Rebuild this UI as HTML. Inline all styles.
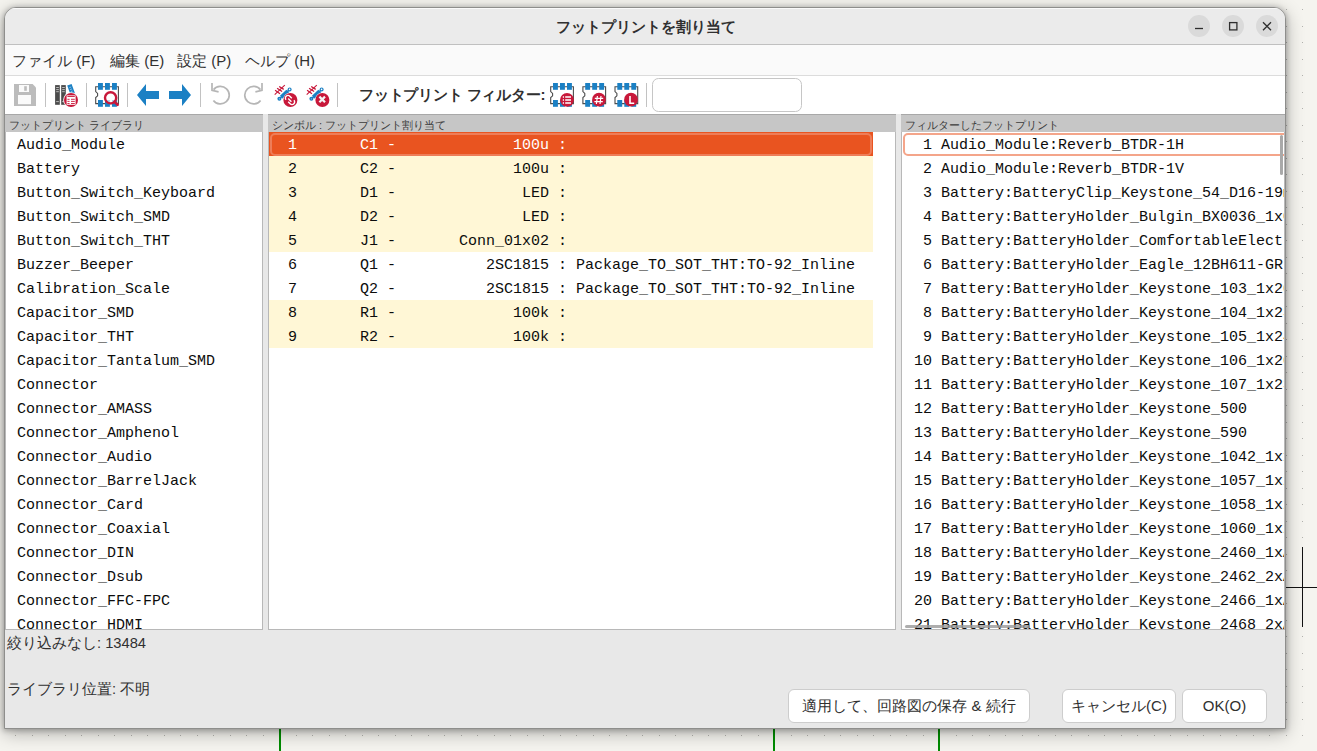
<!DOCTYPE html>
<html><head><meta charset="utf-8">
<style>
*{box-sizing:border-box;margin:0;padding:0}
html,body{width:1317px;height:751px;overflow:hidden;background:#f5f4ef;font-family:"Liberation Sans",sans-serif;position:relative}
#win{position:absolute;left:4px;top:7px;width:1282px;height:722px;border:1px solid #8e8e8c;border-radius:12px 12px 0 0;background:#e8e8e8;overflow:hidden;box-shadow:0 1px 5px 1px rgba(0,0,0,.22),0 4px 18px rgba(0,0,0,.3)}
#title{position:absolute;left:0;top:0;width:100%;height:37px;background:#ebebeb;border-bottom:1px solid #c0c0c0;box-shadow:inset 0 1px 0 #fafafa}
#title .t{position:absolute;left:551px;top:10px;font-size:15px;font-weight:bold;color:#303030}
.wb{position:absolute;top:7px;width:22px;height:22px;border-radius:50%;background:#dadada}
#menu{position:absolute;left:0;top:37px;width:100%;height:31px;background:#fafafa;border-bottom:1px solid #dcdcdc}
#menu span{position:absolute;top:7px;font-size:15px;color:#303030}
.flabel{position:absolute;left:354px;top:10px;font-size:15px;font-weight:bold;color:#303030;letter-spacing:-0.2px}
#tool{position:absolute;left:0;top:68px;width:100%;height:38px;background:#fff}
.sep{position:absolute;top:8px;width:1px;height:24px;background:#c4c4c4}
.hdr{position:absolute;top:106px;height:18px;background:#c6c6c6;border-top:1px solid #a8a8a8;font-size:11px;color:#3c3c3c;padding-left:4px;line-height:21px}
.list{position:absolute;top:124px;height:498px;background:#fff;overflow:hidden;border-left:1px solid #b8b8b8;border-right:1px solid #b8b8b8;border-bottom:1px solid #b8b8b8}
.row{position:absolute;left:0;height:24px;line-height:28px;font-family:"Liberation Mono",monospace;font-size:15px;color:#0c0c0c;white-space:pre}
#l1 .row{left:11px}
#l2 .row{left:0;width:604px;padding-left:1px}
#l2 .yel{background:#fff7d6}
#l2 .sel{background:#e95420;color:#fff}
#l2 .sel::before{content:"";position:absolute;left:1px;top:0.5px;right:1px;bottom:0.5px;border:2px solid #ee7d58;border-radius:5px}
#l3 .row{left:3px}
.focus{position:absolute;left:1px;top:1px;width:390px;height:23px;border:2px solid #f4a58a;border-radius:5px}
.vsb{position:absolute;left:378px;top:3px;width:3px;height:40px;border-radius:2px;background:#a9a9a9}
.hsb{position:absolute;left:3px;top:493px;width:125px;height:3px;border-radius:2px;background:#9a9a9a;opacity:.8;z-index:0}
.status{position:absolute;font-size:14.7px;color:#303030}
.btn{position:absolute;top:681px;height:34px;background:#fff;border:1px solid #cdcdcd;border-radius:6px;font-size:15px;color:#303030;text-align:center;line-height:31px}
</style></head><body>
<svg width="1317" height="751" style="position:absolute;left:0;top:0">
<path d="M15 735h1v1h-1zM32 735h1v1h-1zM48 735h1v1h-1zM65 735h1v1h-1zM81 735h1v1h-1zM98 735h1v1h-1zM114 735h1v1h-1zM131 735h1v1h-1zM147 735h1v1h-1zM164 735h1v1h-1zM180 735h1v1h-1zM197 735h1v1h-1zM213 735h1v1h-1zM230 735h1v1h-1zM246 735h1v1h-1zM263 735h1v1h-1zM279 735h1v1h-1zM296 735h1v1h-1zM312 735h1v1h-1zM329 735h1v1h-1zM345 735h1v1h-1zM362 735h1v1h-1zM378 735h1v1h-1zM395 735h1v1h-1zM411 735h1v1h-1zM428 735h1v1h-1zM444 735h1v1h-1zM461 735h1v1h-1zM477 735h1v1h-1zM494 735h1v1h-1zM510 735h1v1h-1zM527 735h1v1h-1zM543 735h1v1h-1zM560 735h1v1h-1zM576 735h1v1h-1zM593 735h1v1h-1zM609 735h1v1h-1zM626 735h1v1h-1zM642 735h1v1h-1zM659 735h1v1h-1zM675 735h1v1h-1zM692 735h1v1h-1zM708 735h1v1h-1zM725 735h1v1h-1zM741 735h1v1h-1zM758 735h1v1h-1zM774 735h1v1h-1zM791 735h1v1h-1zM807 735h1v1h-1zM824 735h1v1h-1zM840 735h1v1h-1zM857 735h1v1h-1zM873 735h1v1h-1zM890 735h1v1h-1zM906 735h1v1h-1zM923 735h1v1h-1zM939 735h1v1h-1zM956 735h1v1h-1zM972 735h1v1h-1zM989 735h1v1h-1zM1005 735h1v1h-1zM1022 735h1v1h-1zM1038 735h1v1h-1zM1055 735h1v1h-1zM1071 735h1v1h-1zM1088 735h1v1h-1zM1104 735h1v1h-1zM1121 735h1v1h-1zM1137 735h1v1h-1zM1154 735h1v1h-1zM1170 735h1v1h-1zM1187 735h1v1h-1zM1203 735h1v1h-1zM1220 735h1v1h-1zM1236 735h1v1h-1zM1253 735h1v1h-1zM1269 735h1v1h-1zM1286 9h1v1h-1zM1286 26h1v1h-1zM1286 42h1v1h-1zM1286 59h1v1h-1zM1286 75h1v1h-1zM1286 92h1v1h-1zM1286 108h1v1h-1zM1286 125h1v1h-1zM1286 141h1v1h-1zM1286 158h1v1h-1zM1286 174h1v1h-1zM1286 191h1v1h-1zM1286 207h1v1h-1zM1286 224h1v1h-1zM1286 240h1v1h-1zM1286 257h1v1h-1zM1286 273h1v1h-1zM1286 290h1v1h-1zM1286 306h1v1h-1zM1286 323h1v1h-1zM1286 339h1v1h-1zM1286 356h1v1h-1zM1286 372h1v1h-1zM1286 389h1v1h-1zM1286 405h1v1h-1zM1286 422h1v1h-1zM1286 438h1v1h-1zM1286 455h1v1h-1zM1286 471h1v1h-1zM1286 488h1v1h-1zM1286 504h1v1h-1zM1286 521h1v1h-1zM1286 537h1v1h-1zM1286 554h1v1h-1zM1286 570h1v1h-1zM1286 587h1v1h-1zM1286 603h1v1h-1zM1286 620h1v1h-1zM1286 636h1v1h-1zM1286 653h1v1h-1zM1286 669h1v1h-1zM1286 686h1v1h-1zM1286 702h1v1h-1zM1286 719h1v1h-1zM1286 735h1v1h-1zM1302 9h1v1h-1zM1302 26h1v1h-1zM1302 42h1v1h-1zM1302 59h1v1h-1zM1302 75h1v1h-1zM1302 92h1v1h-1zM1302 108h1v1h-1zM1302 125h1v1h-1zM1302 141h1v1h-1zM1302 158h1v1h-1zM1302 174h1v1h-1zM1302 191h1v1h-1zM1302 207h1v1h-1zM1302 224h1v1h-1zM1302 240h1v1h-1zM1302 257h1v1h-1zM1302 273h1v1h-1zM1302 290h1v1h-1zM1302 306h1v1h-1zM1302 323h1v1h-1zM1302 339h1v1h-1zM1302 356h1v1h-1zM1302 372h1v1h-1zM1302 389h1v1h-1zM1302 405h1v1h-1zM1302 422h1v1h-1zM1302 438h1v1h-1zM1302 455h1v1h-1zM1302 471h1v1h-1zM1302 488h1v1h-1zM1302 504h1v1h-1zM1302 521h1v1h-1zM1302 537h1v1h-1zM1302 554h1v1h-1zM1302 570h1v1h-1zM1302 587h1v1h-1zM1302 603h1v1h-1zM1302 620h1v1h-1zM1302 636h1v1h-1zM1302 653h1v1h-1zM1302 669h1v1h-1zM1302 686h1v1h-1zM1302 702h1v1h-1zM1302 719h1v1h-1zM1302 735h1v1h-1z" fill="#b2b2ae"/>
<rect x="279" y="700" width="2" height="51" fill="#008c00"/>
<rect x="773" y="700" width="2" height="51" fill="#008c00"/>
<rect x="938" y="700" width="2" height="51" fill="#008c00"/>
</svg>
<div id="win">
  <div id="title"><div class="t">フットプリントを割り当て</div>
    <div class="wb" style="left:1183px"></div>
    <div class="wb" style="left:1217px"></div>
    <div class="wb" style="left:1251px"></div>
  </div>
  <div id="menu">
    <span style="left:7px">ファイル (F)</span>
    <span style="left:105px">編集 (E)</span>
    <span style="left:172px">設定 (P)</span>
    <span style="left:240px">ヘルプ (H)</span>
  </div>
  <div id="tool">
<div class="flabel">フットプリント フィルター:</div>
  </div>
  <div class="hdr" style="left:0;width:258px">フットプリント ライブラリ</div>
  <div class="hdr" style="left:263px;width:628px">シンボル : フットプリント割り当て</div>
  <div class="hdr" style="left:896px;width:384px">フィルターしたフットプリント</div>
<div class="list" id="l1" style="left:0;width:258px">
<div class="row" style="top:0px;left:LX">Audio_Module</div>
<div class="row" style="top:24px;left:LX">Battery</div>
<div class="row" style="top:48px;left:LX">Button_Switch_Keyboard</div>
<div class="row" style="top:72px;left:LX">Button_Switch_SMD</div>
<div class="row" style="top:96px;left:LX">Button_Switch_THT</div>
<div class="row" style="top:120px;left:LX">Buzzer_Beeper</div>
<div class="row" style="top:144px;left:LX">Calibration_Scale</div>
<div class="row" style="top:168px;left:LX">Capacitor_SMD</div>
<div class="row" style="top:192px;left:LX">Capacitor_THT</div>
<div class="row" style="top:216px;left:LX">Capacitor_Tantalum_SMD</div>
<div class="row" style="top:240px;left:LX">Connector</div>
<div class="row" style="top:264px;left:LX">Connector_AMASS</div>
<div class="row" style="top:288px;left:LX">Connector_Amphenol</div>
<div class="row" style="top:312px;left:LX">Connector_Audio</div>
<div class="row" style="top:336px;left:LX">Connector_BarrelJack</div>
<div class="row" style="top:360px;left:LX">Connector_Card</div>
<div class="row" style="top:384px;left:LX">Connector_Coaxial</div>
<div class="row" style="top:408px;left:LX">Connector_DIN</div>
<div class="row" style="top:432px;left:LX">Connector_Dsub</div>
<div class="row" style="top:456px;left:LX">Connector_FFC-FPC</div>
<div class="row" style="top:480px;left:LX">Connector_HDMI</div>
</div>
<div class="list" id="l2" style="left:263px;width:628px">
<div class="row sel" style="top:0px">  1       C1 -             100u : </div>
<div class="row yel" style="top:24px">  2       C2 -             100u : </div>
<div class="row yel" style="top:48px">  3       D1 -              LED : </div>
<div class="row yel" style="top:72px">  4       D2 -              LED : </div>
<div class="row yel" style="top:96px">  5       J1 -       Conn_01x02 : </div>
<div class="row" style="top:120px">  6       Q1 -          2SC1815 : Package_TO_SOT_THT:TO-92_Inline</div>
<div class="row" style="top:144px">  7       Q2 -          2SC1815 : Package_TO_SOT_THT:TO-92_Inline</div>
<div class="row yel" style="top:168px">  8       R1 -             100k : </div>
<div class="row yel" style="top:192px">  9       R2 -             100k : </div>
</div>
<div class="list" id="l3" style="left:896px;width:384px">
<div class="focus"></div>
<div class="row" style="top:0px">  1 Audio_Module:Reverb_BTDR-1H</div>
<div class="row" style="top:24px">  2 Audio_Module:Reverb_BTDR-1V</div>
<div class="row" style="top:48px">  3 Battery:BatteryClip_Keystone_54_D16-19mm</div>
<div class="row" style="top:72px">  4 Battery:BatteryHolder_Bulgin_BX0036_1xC</div>
<div class="row" style="top:96px">  5 Battery:BatteryHolder_ComfortableElectronic_CH273-2450_1x2450</div>
<div class="row" style="top:120px">  6 Battery:BatteryHolder_Eagle_12BH611-GR</div>
<div class="row" style="top:144px">  7 Battery:BatteryHolder_Keystone_103_1x20mm</div>
<div class="row" style="top:168px">  8 Battery:BatteryHolder_Keystone_104_1x23mm</div>
<div class="row" style="top:192px">  9 Battery:BatteryHolder_Keystone_105_1x2430</div>
<div class="row" style="top:216px"> 10 Battery:BatteryHolder_Keystone_106_1x20mm</div>
<div class="row" style="top:240px"> 11 Battery:BatteryHolder_Keystone_107_1x23mm</div>
<div class="row" style="top:264px"> 12 Battery:BatteryHolder_Keystone_500</div>
<div class="row" style="top:288px"> 13 Battery:BatteryHolder_Keystone_590</div>
<div class="row" style="top:312px"> 14 Battery:BatteryHolder_Keystone_1042_1x18650</div>
<div class="row" style="top:336px"> 15 Battery:BatteryHolder_Keystone_1057_1x2032</div>
<div class="row" style="top:360px"> 16 Battery:BatteryHolder_Keystone_1058_1x2032</div>
<div class="row" style="top:384px"> 17 Battery:BatteryHolder_Keystone_1060_1x2032</div>
<div class="row" style="top:408px"> 18 Battery:BatteryHolder_Keystone_2460_1xAA</div>
<div class="row" style="top:432px"> 19 Battery:BatteryHolder_Keystone_2462_2xAA</div>
<div class="row" style="top:456px"> 20 Battery:BatteryHolder_Keystone_2466_1xAA</div>
<div class="row" style="top:480px"> 21 Battery:BatteryHolder_Keystone_2468_2xAAA</div>
<div class="vsb"></div><div class="hsb"></div>
</div>
  <div class="status" style="left:2px;top:626px">絞り込みなし: 13484</div>
  <div class="status" style="left:2px;top:672px">ライブラリ位置: 不明</div>
  <div class="btn" style="left:783px;width:242px">適用して、回路図の保存 &amp; 続行</div>
  <div class="btn" style="left:1057px;width:114px">キャンセル(C)</div>
  <div class="btn" style="left:1177px;width:85px">OK(O)</div>
</div>
<svg id="tb" width="1317" height="751" viewBox="0 0 1317 751" style="position:absolute;left:0;top:0;pointer-events:none">

<!-- save -->
<path d="M14 84 H32.6 L36 87.4 V106 H14 Z" fill="#bcbcbc"/>
<rect x="19" y="85" width="10" height="7" fill="#fafafa"/>
<rect x="24.2" y="86.2" width="2.6" height="4.6" fill="#bcbcbc"/>
<rect x="18" y="95" width="13" height="9.2" fill="#fafafa"/>
<!-- separators -->
<rect x="45" y="83" width="1" height="24" fill="#c2c2c2"/>
<rect x="86" y="83" width="1" height="24" fill="#c2c2c2"/>
<rect x="127" y="83" width="1" height="24" fill="#c2c2c2"/>
<rect x="200" y="83" width="1" height="24" fill="#c2c2c2"/>
<rect x="337" y="83" width="1" height="24" fill="#c2c2c2"/>
<rect x="646" y="83" width="1" height="24" fill="#c2c2c2"/>
<!-- library -->
<rect x="55.1" y="85.1" width="4.7" height="19.7" fill="#4b4b4b"/>
<rect x="61.2" y="85.1" width="4.6" height="19.7" fill="#4b4b4b"/>
<path d="M56.2 87.5 H58.8 M56.2 89.6 H58.8 M56.2 91.7 H58.8 M56.2 101.6 H58.8 M62.2 87.5 H64.8 M62.2 89.6 H64.8 M62.2 91.7 H64.8 M62.2 101.6 H64.8" stroke="#c8c8c8" stroke-width="0.9"/>
<path d="M67.2 85.6 L71.6 84 L75.2 94 L70.8 95.6 Z" fill="#1b80c4"/>
<path d="M69.4 87.6 L71.2 87 M70.1 89.6 L71.9 89 M70.8 91.6 L72.6 91" stroke="#a8d0ee" stroke-width="0.8"/>
<circle cx="71" cy="100" r="7.8" fill="#fff"/>
<circle cx="71" cy="100" r="7" fill="#c8183a"/>
<rect x="66.6" y="95.4" width="9" height="9.4" fill="#fff"/>
<path d="M67.4 96.5 H74.8 M67.4 99.3 H69.6 M71 99.3 H74.8 M67.4 101.4 H69.6 M71 101.4 H74.8 M67.4 103.5 H69.6 M71 103.5 H74.8" stroke="#c8183a" stroke-width="0.9"/>
<!-- footprint viewer -->
<g transform="translate(95.2 86.2)">
<path d="M0.5 0.5 H23.2 V17.4 H0.5 V11.4 L2.4 9.6 V7.2 L0.5 5.4 Z" fill="#fff" stroke="#4b4b4b" stroke-width="1.1"/>
<rect x="2.8" y="-3.2" width="4.9" height="6.8" fill="#1b80c4"/>
<rect x="9.8" y="-3.2" width="4.9" height="6.8" fill="#1b80c4"/>
<rect x="16.8" y="-3.2" width="4.9" height="6.8" fill="#1b80c4"/>
<rect x="2.8" y="13.8" width="4.9" height="6.8" fill="#1b80c4"/>
<rect x="9.8" y="13.8" width="4.9" height="6.8" fill="#1b80c4"/>
<rect x="16.8" y="13.8" width="4.9" height="6.8" fill="#1b80c4"/>
</g>
<circle cx="110.6" cy="97.8" r="5.6" fill="rgba(255,255,255,.65)" stroke="#c8183a" stroke-width="2.4"/>
<path d="M114.6 101.8 L117.6 104.8" stroke="#c8183a" stroke-width="2.8" stroke-linecap="round"/>
<!-- arrows -->
<path d="M137 95 L146 84 V91 H159 V99 H146 V106 Z" fill="#1b80c4"/>
<path d="M191 95 L182 84 V91 H169 V99 H182 V106 Z" fill="#1b80c4"/>
<!-- undo / redo -->
<g fill="none" stroke="#b6b6b6" stroke-width="1.7">
<path d="M213.6 89.6 A8.8 8.8 0 1 1 213.4 100.4"/>
<path d="M212 83 V90.4 L218.6 91.8"/>
<path d="M260.4 89.6 A8.8 8.8 0 1 0 260.6 100.4"/>
<path d="M262 83 V90.4 L255.4 91.8"/>
</g>
<!-- link icon -->
<g transform="translate(0 0)">
<path d="M274.7 94.7 L284.8 85.1" stroke="#c8183a" stroke-width="1.1" fill="none"/>
<path d="M275.1 90.3 L280 93.7 M277.1 88.3 L282.1 91.5 M279.2 86.5 L283.7 89.4" stroke="#c8183a" stroke-width="1.3" fill="none"/>
<path d="M279.6 98.6 L289.6 89.6" stroke="#1b80c4" stroke-width="1.6" fill="none"/>
<path d="M281.4 97.2 L287.8 91.2" stroke="#1b80c4" stroke-width="4.2" fill="none"/>
<circle cx="289.6" cy="89.4" r="2" fill="#1b80c4"/><circle cx="289.6" cy="89.4" r="0.8" fill="#fff"/>
<circle cx="279.4" cy="98.8" r="2" fill="#1b80c4"/><circle cx="279.4" cy="98.8" r="0.6" fill="#9cc8ea"/>
<circle cx="290.4" cy="100" r="7.4" fill="#fff"/>
<circle cx="290.4" cy="100" r="7" fill="#c8183a"/>
</g>
<path d="M286.1 99.8 A2.5 2.5 0 0 1 289.8 96.2 L291.8 98.2 M293.9 100.2 A2.5 2.5 0 0 1 290.2 103.8 L288.2 101.8 M288.2 98.6 L291.4 101.8" stroke="#fff" stroke-width="1.4" fill="none"/>
<!-- unlink icon -->
<g transform="translate(32 0)">
<path d="M274.7 94.7 L284.8 85.1" stroke="#c8183a" stroke-width="1.1" fill="none"/>
<path d="M275.1 90.3 L280 93.7 M277.1 88.3 L282.1 91.5 M279.2 86.5 L283.7 89.4" stroke="#c8183a" stroke-width="1.3" fill="none"/>
<path d="M279.6 98.6 L289.6 89.6" stroke="#1b80c4" stroke-width="1.6" fill="none"/>
<path d="M281.4 97.2 L287.8 91.2" stroke="#1b80c4" stroke-width="4.2" fill="none"/>
<circle cx="289.6" cy="89.4" r="2" fill="#1b80c4"/><circle cx="289.6" cy="89.4" r="0.8" fill="#fff"/>
<circle cx="279.4" cy="98.8" r="2" fill="#1b80c4"/><circle cx="279.4" cy="98.8" r="0.6" fill="#9cc8ea"/>
<circle cx="290.4" cy="100" r="7.4" fill="#fff"/>
<circle cx="290.4" cy="100" r="7" fill="#c8183a"/>
</g>
<path d="M319.4 96.6 L325 102.2 M325 96.6 L319.4 102.2" stroke="#f4f4f4" stroke-width="2.2"/>
<!-- filter icons -->
<g transform="translate(550.2 86.2)">
<path d="M0.5 0.5 H23.2 V17.4 H0.5 V11.4 L2.4 9.6 V7.2 L0.5 5.4 Z" fill="#fff" stroke="#4b4b4b" stroke-width="1.1"/>
<rect x="2.8" y="-3.2" width="4.9" height="6.8" fill="#1b80c4"/>
<rect x="9.8" y="-3.2" width="4.9" height="6.8" fill="#1b80c4"/>
<rect x="16.8" y="-3.2" width="4.9" height="6.8" fill="#1b80c4"/>
<rect x="2.8" y="13.8" width="4.9" height="6.8" fill="#1b80c4"/>
<rect x="9.8" y="13.8" width="4.9" height="6.8" fill="#1b80c4"/>
<rect x="16.8" y="13.8" width="4.9" height="6.8" fill="#1b80c4"/>
</g>
<circle cx="567" cy="99.8" r="7.4" fill="#fff" opacity=".0"/>
<circle cx="567" cy="99.8" r="6.9" fill="#c8183a"/>
<path d="M562.8 97 H564 M565.2 97 H571 M562.8 100 H564 M565.2 100 H571 M562.8 103 H564 M565.2 103 H571" stroke="#fff" stroke-width="1.6"/>
<g transform="translate(582.4 86.2)">
<path d="M0.5 0.5 H23.2 V17.4 H0.5 V11.4 L2.4 9.6 V7.2 L0.5 5.4 Z" fill="#fff" stroke="#4b4b4b" stroke-width="1.1"/>
<rect x="2.8" y="-3.2" width="4.9" height="6.8" fill="#1b80c4"/>
<rect x="9.8" y="-3.2" width="4.9" height="6.8" fill="#1b80c4"/>
<rect x="16.8" y="-3.2" width="4.9" height="6.8" fill="#1b80c4"/>
<rect x="2.8" y="13.8" width="4.9" height="6.8" fill="#1b80c4"/>
<rect x="9.8" y="13.8" width="4.9" height="6.8" fill="#1b80c4"/>
<rect x="16.8" y="13.8" width="4.9" height="6.8" fill="#1b80c4"/>
</g>
<circle cx="599" cy="99.7" r="6.9" fill="#c8183a"/>
<path d="M597.4 96 L596.4 104 M601 96 L600 104 M594.8 98.4 H603.2 M594.4 101.6 H602.8" stroke="#fff" stroke-width="1.2"/>
<g transform="translate(614.5 86.2)">
<path d="M0.5 0.5 H23.2 V17.4 H0.5 V11.4 L2.4 9.6 V7.2 L0.5 5.4 Z" fill="#fff" stroke="#4b4b4b" stroke-width="1.1"/>
<rect x="2.8" y="-3.2" width="4.9" height="6.8" fill="#1b80c4"/>
<rect x="9.8" y="-3.2" width="4.9" height="6.8" fill="#1b80c4"/>
<rect x="16.8" y="-3.2" width="4.9" height="6.8" fill="#1b80c4"/>
<rect x="2.8" y="13.8" width="4.9" height="6.8" fill="#1b80c4"/>
<rect x="9.8" y="13.8" width="4.9" height="6.8" fill="#1b80c4"/>
<rect x="16.8" y="13.8" width="4.9" height="6.8" fill="#1b80c4"/>
</g>
<circle cx="631" cy="99.7" r="6.9" fill="#c8183a"/>
<path d="M630 96 V103.2 H634.2" stroke="#fff" stroke-width="1.6" fill="none"/>
<!-- search box -->
<rect x="652.5" y="78.5" width="149" height="33" rx="6" fill="#fff" stroke="#c6c6c6"/>
<!-- title bar glyphs -->
<path d="M1195 28.5 H1203" stroke="#2e2e2e" stroke-width="1.3"/>
<rect x="1229.6" y="22.6" width="7.3" height="7.3" fill="none" stroke="#2e2e2e" stroke-width="1.3"/>
<path d="M1263 22.2 L1271 30.2 M1271 22.2 L1263 30.2" stroke="#2e2e2e" stroke-width="1.3"/>
</svg>

<svg width="1317" height="751" style="position:absolute;left:0;top:0;pointer-events:none">
<rect x="1302" y="547" width="1" height="80" fill="#111"/>
<rect x="1286" y="587" width="31" height="1" fill="#111"/>
</svg>
</body></html>
